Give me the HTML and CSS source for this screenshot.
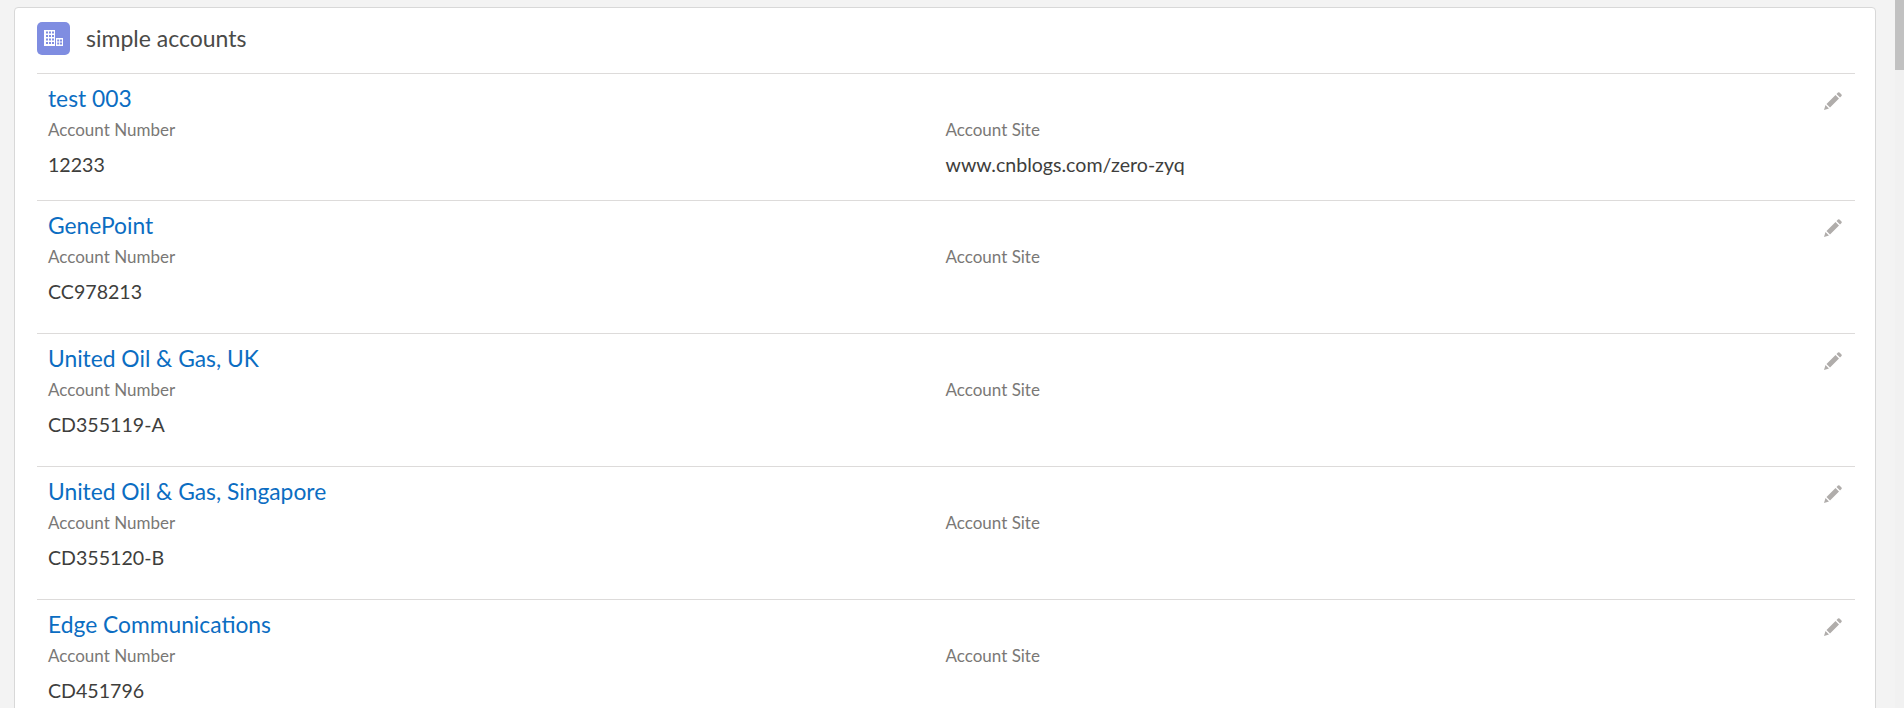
FILE: index.html
```html
<!DOCTYPE html>
<html lang="en">
<head>
<meta charset="utf-8">
<title>simple accounts</title>
<link rel="stylesheet" href="styles.css">
</head>
<body>
<div class="page">
  <main class="card">
    <header class="card-header">
      <span class="badge">
        <svg viewBox="0 0 19 16" width="19" height="16" fill="#fff"><path d="M0 0h11v16H0z"/><path d="M12 8h7v8h-7z"/><g fill="#7f8de1"><path d="M2 1.500h2v2H2zM5 1.500h2v2H5zM8 1.500h2v2H8zM2 5h2v2H2zM5 5h2v2H5zM8 5h2v2H8zM2 8.500h2v2H2zM5 8.500h2v2H5zM8 8.500h2v2H8zM2 12h2v2H2zM5 12h2v2H5zM8 12h2v2H8z"/><path d="M13.200 9.500h2v2h-2zM16 9.500h2v2h-2zM13.200 12.500h2v2h-2zM16 12.500h2v2h-2z"/></g></svg>
      </span>
      <h1 class="card-title">simple accounts</h1>
    </header>
    <ul class="list">
      <li class="row row-first">
        <div class="row-top"><a class="name">test 003</a><svg class="edit" viewBox="0 0 20 20" width="20" height="20"><path d="M1 19l1.500-5 3.500 3.500zM3.500 13l9-9 3.500 3.500-9 9zM13.500 3l1.500-1.500q.8-.7 1.500 0l2 2q.7.7 0 1.500L17 6.500z"/></svg></div>
        <div class="fields">
          <div class="field"><div class="label">Account Number</div><div class="value">12233</div></div>
          <div class="field"><div class="label">Account Site</div><div class="value">www.cnblogs.com/zero-zyq</div></div>
        </div>
      </li>
      <li class="row">
        <div class="row-top"><a class="name">GenePoint</a><svg class="edit" viewBox="0 0 20 20" width="20" height="20"><path d="M1 19l1.500-5 3.500 3.500zM3.500 13l9-9 3.500 3.500-9 9zM13.500 3l1.500-1.500q.8-.7 1.500 0l2 2q.7.7 0 1.500L17 6.500z"/></svg></div>
        <div class="fields">
          <div class="field"><div class="label">Account Number</div><div class="value">CC978213</div></div>
          <div class="field"><div class="label">Account Site</div><div class="value"></div></div>
        </div>
      </li>
      <li class="row">
        <div class="row-top"><a class="name">United Oil &amp; Gas, UK</a><svg class="edit" viewBox="0 0 20 20" width="20" height="20"><path d="M1 19l1.500-5 3.500 3.500zM3.500 13l9-9 3.500 3.500-9 9zM13.500 3l1.500-1.500q.8-.7 1.500 0l2 2q.7.7 0 1.500L17 6.500z"/></svg></div>
        <div class="fields">
          <div class="field"><div class="label">Account Number</div><div class="value">CD355119-A</div></div>
          <div class="field"><div class="label">Account Site</div><div class="value"></div></div>
        </div>
      </li>
      <li class="row">
        <div class="row-top"><a class="name">United Oil &amp; Gas, Singapore</a><svg class="edit" viewBox="0 0 20 20" width="20" height="20"><path d="M1 19l1.500-5 3.500 3.500zM3.500 13l9-9 3.500 3.500-9 9zM13.500 3l1.500-1.500q.8-.7 1.500 0l2 2q.7.7 0 1.500L17 6.500z"/></svg></div>
        <div class="fields">
          <div class="field"><div class="label">Account Number</div><div class="value">CD355120-B</div></div>
          <div class="field"><div class="label">Account Site</div><div class="value"></div></div>
        </div>
      </li>
      <li class="row">
        <div class="row-top"><a class="name">Edge Communications</a><svg class="edit" viewBox="0 0 20 20" width="20" height="20"><path d="M1 19l1.500-5 3.500 3.500zM3.500 13l9-9 3.500 3.500-9 9zM13.500 3l1.500-1.500q.8-.7 1.500 0l2 2q.7.7 0 1.500L17 6.500z"/></svg></div>
        <div class="fields">
          <div class="field"><div class="label">Account Number</div><div class="value">CD451796</div></div>
          <div class="field"><div class="label">Account Site</div><div class="value"></div></div>
        </div>
      </li>
    </ul>
  </main>
  <div class="scrollbar"><div class="thumb"></div></div>
</div>
</body>
</html>
```
FILE: styles.css
```css
html, body {
  margin: 0;
  height: 708px;
  overflow: hidden;
}
body {
  background: #f3f3f3;
  font-family: Lato, "Open Sans", sans-serif;
  color: #333;
}
.page {
  display: flex;
  height: 708px;
  padding: 7px 0 0 14px;
  box-sizing: border-box;
}
.card {
  flex: 1;
  height: 760px;
  margin-right: 19px;
  background: #fff;
  border: 1px solid #d8d8d8;
  border-radius: 4px;
  padding: 0 20px 0 22px;
  box-sizing: border-box;
}
.card-header {
  display: flex;
  align-items: center;
  gap: 16px;
  height: 65px;
  padding-bottom: 5px;
  box-sizing: border-box;
}
.badge {
  width: 33px;
  height: 33px;
  border-radius: 5px;
  background: #7f8de1;
  display: flex;
  align-items: center;
  justify-content: center;
}
.card-title {
  margin: 0;
  font-size: 23px;
  font-weight: 400;
  color: #4a4a48;
}
.list {
  list-style: none;
  margin: 0;
  padding: 0;
}
.row {
  height: 133px;
  border-top: 1px solid #dddbda;
  box-sizing: border-box;
  padding: 10px 12px 0 11px;
}
.row-first {
  height: 127px;
}
.row-top {
  display: flex;
  justify-content: space-between;
  align-items: flex-start;
  height: 36px;
}
.name {
  font-size: 22.800px;
  line-height: 28px;
  color: #0b6dc2;
}
.edit {
  fill: #b0adab;
  margin-top: 7px;
}
.fields {
  display: grid;
  grid-template-columns: 1fr 1fr;
  column-gap: 0;
}
.label {
  font-size: 17px;
  line-height: 20px;
  color: #7a7876;
}
.value {
  font-size: 19.600px;
  line-height: 24px;
  color: #3e3e3c;
  margin-top: 13px;
  min-height: 24px;
}
.scrollbar {
  width: 9px;
  background: #f1f1f1;
  margin-top: -7px;
  flex: none;
}
.thumb {
  height: 70px;
  background: #c1c1c1;
}
```
